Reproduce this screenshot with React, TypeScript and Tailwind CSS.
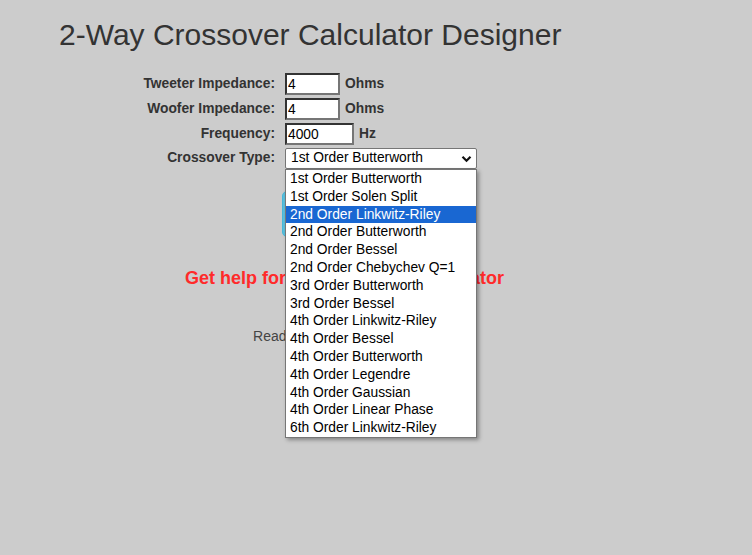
import React from "react";

const options = [
  "1st Order Butterworth",
  "1st Order Solen Split",
  "2nd Order Linkwitz-Riley",
  "2nd Order Butterworth",
  "2nd Order Bessel",
  "2nd Order Chebychev Q=1",
  "3rd Order Butterworth",
  "3rd Order Bessel",
  "4th Order Linkwitz-Riley",
  "4th Order Bessel",
  "4th Order Butterworth",
  "4th Order Legendre",
  "4th Order Gaussian",
  "4th Order Linear Phase",
  "6th Order Linkwitz-Riley",
];

const inputCls =
  "h-[22px] border-2 border-t-[#333] border-l-[#333] border-b-[#767676] border-r-[#767676] bg-white px-[1px] text-[13.8px] font-normal text-black outline-none";

export default function App() {
  return (
    <div className="min-h-screen w-full bg-[#cccccc] font-['Liberation_Sans',Arial,sans-serif]">
      <div className="ml-[59px] w-[571px] pt-[18px]">
        <h1 className="text-[30px] leading-[34px] text-[#333]">2-Way Crossover Calculator Designer</h1>

        {/* form */}
        <div className="mt-[21px] grid grid-cols-[216px_auto] items-center gap-x-[10px] gap-y-[3px] text-[13.8px] font-bold text-[#333]">
          <div className="text-right">Tweeter Impedance:</div>
          <div className="flex items-center gap-[5px]">
            <input className={`${inputCls} w-[55px]`} defaultValue="4" />
            <span>Ohms</span>
          </div>

          <div className="text-right">Woofer Impedance:</div>
          <div className="flex items-center gap-[5px]">
            <input className={`${inputCls} w-[55px]`} defaultValue="4" />
            <span>Ohms</span>
          </div>

          <div className="text-right">Frequency:</div>
          <div className="flex items-center gap-[5px]">
            <input className={`${inputCls} w-[69px]`} defaultValue="4000" />
            <span>Hz</span>
          </div>

          <div className="text-right">Crossover Type:</div>
          <div className="relative w-[192px]">
            <div className="flex h-[21px] items-center justify-between rounded-[2px] border border-[#767676] bg-white pl-[5px] pr-[4px] font-normal text-black">
              <span>1st Order Butterworth</span>
              <svg width="11" height="8" viewBox="0 0 11 8" fill="none">
                <path d="M1.5 1.8 L5.5 5.8 L9.5 1.8" stroke="#111" strokeWidth="2.2" />
              </svg>
            </div>

            {/* open option list */}
            <div className="absolute left-0 top-full z-10 w-[192px] border border-[#767676] bg-white font-normal text-black shadow-[2px_2px_4px_rgba(0,0,0,0.35)]">
              {options.map((o, i) => (
                <div
                  key={o}
                  className={`h-[17.8px] pl-[4px] leading-[17.8px] ${i === 2 ? "bg-[#1967d2] text-white" : ""}`}
                >
                  {o}
                </div>
              ))}
            </div>
          </div>
        </div>

        <button className="mx-auto mt-[22px] block h-[46px] w-[126px] rounded-[5px] border border-[#46b8da] bg-[#5bc0de] text-[16px] text-white">
          Calculate
        </button>

        <p className="mt-[31px] text-center text-[18px] font-bold leading-[21px] text-[#ff2a2a]">
          Get help for this crossover calculator
        </p>

        <p className="mt-[39px] pr-[3px] text-center text-[14px] leading-[17px] text-[#444]">
          Read more about crossovers
        </p>
      </div>
    </div>
  );
}
